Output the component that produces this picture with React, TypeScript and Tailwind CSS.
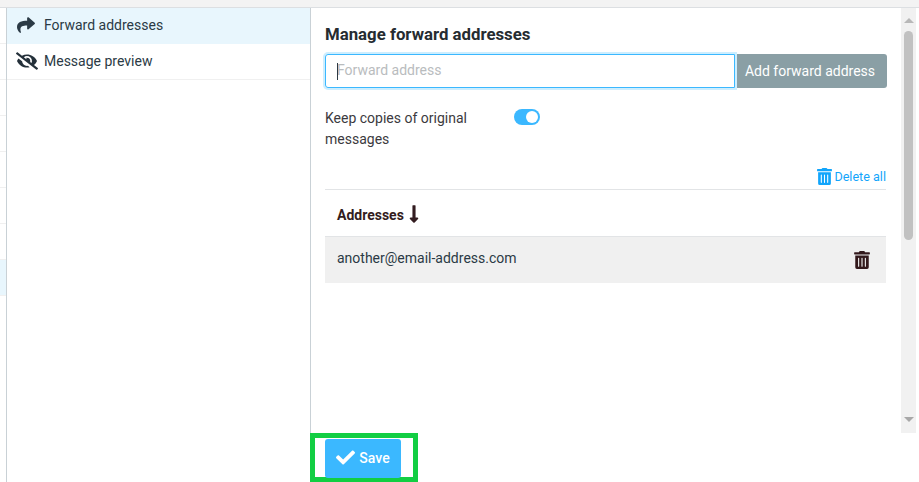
import { FaCheck, FaEyeSlash, FaLongArrowAltDown, FaShare, FaTrashAlt } from 'react-icons/fa';

const stripRows = ['bg-white', 'bg-white', 'bg-white', 'bg-white', 'bg-white', 'bg-white', 'bg-white', 'bg-[#e8f6fd]'];

export default function App() {
  return (
    <div className="flex h-[482px] w-[919px] flex-col overflow-hidden bg-white font-['Roboto',sans-serif] text-sm text-[#2b3a45]">
      <div className="h-2 shrink-0 border-b border-[#dcdfe2] bg-[#f3f3f3]" />
      <div className="flex min-h-0 flex-1">
        {/* list behind the settings panel, only its edge shows */}
        <div className="w-[7px] shrink-0 border-r border-[#c9d1d6]">
          {stripRows.map((bg, i) => (
            <div key={i} className={`h-9 border-b border-[#f0f0f0] ${bg}`} />
          ))}
        </div>

        <nav className="w-[304px] shrink-0 border-r border-[#c9d1d6]">
          <div className="flex h-9 items-center bg-[#e8f6fd] pb-[2px] pl-[10px]">
            <FaShare className="mr-2 w-[18px] text-[18px] text-[#2b3a45]" />
            <span className="pl-[1px]">Forward addresses</span>
          </div>
          <div className="flex h-9 items-center border-b border-[#f0f0f0] pb-[2px] pl-[9px]">
            <FaEyeSlash className="mr-[6px] text-[22px] text-[#24303a]" />
            <span>Message preview</span>
          </div>
        </nav>

        <div className="flex min-w-0 flex-1 flex-col">
          <div className="flex h-[425px] shrink-0">
            <main className="flex-1 pl-[14px] pr-[14px]">
              <h2 className="mt-4 text-[16.8px] leading-5 font-bold text-[#262c31]">Manage forward addresses</h2>
              <div className="mt-[10px] flex h-[34px] w-[562px]">
                <div className="relative z-10 flex flex-1 items-center rounded-l-[3px] border border-[#3bb8ff] pb-[2px] pl-[11px] shadow-[0_0_0_2px_#cdeeff]">
                  <span className="absolute top-[8px] left-[11px] h-[17px] w-px bg-[#2b3a45]" />
                  <span className="text-[#b9bcbe]">Forward address</span>
                </div>
                <button className="w-[152px] rounded-r-[3px] bg-[#8a9fa5] pr-[2px] text-center text-sm text-white">
                  Add forward address
                </button>
              </div>

              <div className="mt-5 flex items-start">
                <p className="w-[189px] leading-[21px] text-[#3c3a3e]">Keep copies of original messages</p>
                <span className="mt-[1px] flex h-4 w-[26px] items-center justify-end rounded-full bg-[#3bb8ff] pr-[2px]">
                  <span className="h-3 w-3 rounded-full bg-white" />
                </span>
              </div>

              <div className="mt-[17px] flex h-[20px] w-[561px] items-center justify-end text-[12.6px] text-[#12a5fb]">
                <FaTrashAlt className="mr-[1px] mb-[1px] text-[17px]" />
                <span>Delete all</span>
              </div>

              <div className="mt-[2px] w-[561px] border-t border-[#e2e4e6]">
                <div className="flex h-[47px] items-center border-b border-[#e2e4e6] pt-[4px] pl-3 font-bold text-[#331c20]">
                  Addresses
                  <FaLongArrowAltDown className="mb-[3px] text-[20px]" />
                </div>
                <div className="flex h-[46px] items-center justify-between bg-[#f0f0f0] pr-[15px] pl-3 text-[#2b3a45]">
                  <span className="pb-[4px]">another@email-address.com</span>
                  <FaTrashAlt className="text-[18px] text-[#33191c]" />
                </div>
              </div>
            </main>

            <div className="flex w-[15px] shrink-0 flex-col items-center bg-[#f1f1f1]">
              <span className="mt-[10px] h-0 w-0 border-x-[5px] border-b-[5px] border-x-transparent border-b-[#b8b8b8]" />
              <span className="mt-[8px] h-[209px] w-[9px] rounded-full bg-[#c1c1c1]" />
              <span className="mt-[177px] h-0 w-0 border-x-[5px] border-t-[5px] border-x-transparent border-t-[#a8a8a8]" />
            </div>
            <div className="w-[3px] shrink-0" />
          </div>

          {/* green highlight box drawn round the save button */}
          <div className="-ml-px h-[49px] w-[108px] border-[5px] border-[#12ce43] pt-[1px] pl-[10px]">
            <button className="flex h-[39px] w-[76px] items-center justify-center rounded-[3px] bg-[#3bb8ff] pb-[2px] text-sm font-medium text-white">
              <FaCheck className="mr-[4px] text-[19px]" />
              Save
            </button>
          </div>
        </div>
      </div>
    </div>
  );
}
